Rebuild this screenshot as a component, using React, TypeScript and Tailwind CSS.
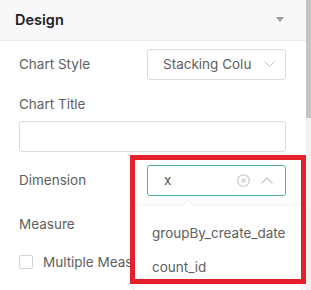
import React from "react";

export default function App() {
  return (
    <div
      className="relative w-[311px] h-[290px] overflow-hidden bg-white flex"
      style={{ fontFamily: "Inter, 'Noto Sans', sans-serif" }}
    >
      <div className="flex-1 flex flex-col">
        <div className="h-[41px] shrink-0 bg-[#f7f8fa] border-b border-[#e9eaec] flex items-center justify-between pl-[15px] pr-[22px]">
          <span className="text-[14.5px] font-semibold text-[#1d1d1f]">Design</span>
          <svg width="8" height="6" viewBox="0 0 8 6">
            <path d="M0 0 L8 0 L4 5 Z" fill="#9a9a9a" />
          </svg>
        </div>
        <div className="pl-[19px] pr-[20px] flex flex-col text-[13.5px] text-[#606060]">
          <div className="mt-[8px] h-[31px] flex items-center justify-between">
            <span>Chart Style</span>
            <div className="w-[139px] h-[31px] border border-[#dcdcdc] rounded-[3px] flex items-center pl-[15px] pr-[10px] gap-[12px]">
              <span className="flex-1 overflow-hidden whitespace-nowrap text-[#606060]">Stacking Column</span>
              <svg width="11" height="7" viewBox="0 0 11 7">
                <path d="M0.5 0.5 L5.5 5.5 L10.5 0.5" stroke="#c4c4c4" fill="none" strokeWidth="1" />
              </svg>
            </div>
          </div>
          <div className="mt-[14px] h-[20px] flex items-center">Chart Title</div>
          <div className="mt-[7px] h-[31px] border border-[#dcdcdc] rounded-[3px]" />
          <div className="mt-[13px] h-[31px] flex items-center justify-between">
            <span>Dimension</span>
            <div className="w-[139px] h-[31px] border border-[#4fb3a4] rounded-[3px] flex items-center pl-[16px] pr-[12px]">
              <span className="flex-1 text-[#555]">x</span>
              <svg width="13" height="13" viewBox="0 0 13 13" className="mr-[11px]">
                <circle cx="6.5" cy="6.5" r="5.8" stroke="#c4c4c4" strokeWidth="1.1" fill="none" />
                <path d="M4.6 4.6 L8.4 8.4 M8.4 4.6 L4.6 8.4" stroke="#c4c4c4" strokeWidth="1.1" />
              </svg>
              <svg width="12" height="7" viewBox="0 0 12 7">
                <path d="M0.5 6.5 L6 1 L11.5 6.5" stroke="#c4c4c4" fill="none" strokeWidth="1.1" />
              </svg>
            </div>
          </div>
          <div className="mt-[18px] h-[20px] flex items-center">Measure</div>
          <div className="mt-[18px] h-[20px] flex items-center">
            <div className="w-[14px] h-[14px] border border-[#d4d4d4] rounded-[2px] bg-white" />
            <span className="ml-[10px] whitespace-nowrap">Multiple Measures</span>
          </div>
        </div>
      </div>
      <div className="w-[5px] shrink-0 bg-[#f1f1f1] flex flex-col">
        <div className="h-[118px] bg-[#c4c4c4]" />
      </div>

      {/* dropdown */}
      <div className="absolute left-[135px] top-[206px] w-[166px] h-[90px] bg-white shadow-[0_2px_8px_rgba(0,0,0,0.12)] text-[13.5px] text-[#606060] flex flex-col pt-[10px]">
        <div className="absolute -top-[4px] left-[49px] w-[8px] h-[8px] bg-white rotate-45 shadow-[-1px_-1px_2px_rgba(0,0,0,0.06)]" />
        <div className="h-[34px] flex items-center pl-[17px] whitespace-nowrap">groupBy_create_date</div>
        <div className="h-[34px] flex items-center pl-[17px]">count_id</div>
      </div>

      {/* annotation */}
      <div className="absolute left-[130px] top-[155px] w-[176px] h-[129px] border-[5px] border-[#e3202b]" />
    </div>
  );
}
